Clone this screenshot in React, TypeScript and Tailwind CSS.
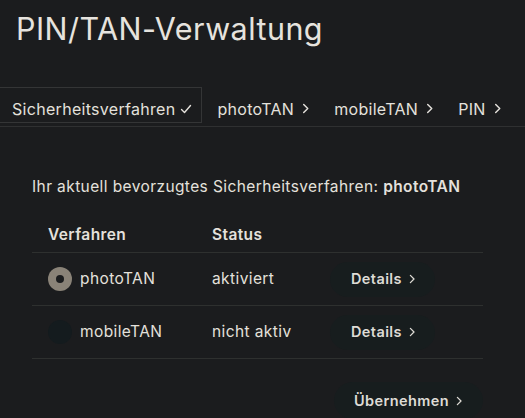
import React from "react";

function Chevron({ className = "" }: { className?: string }) {
  return (
    <svg viewBox="0 0 10 12" className={className} fill="none" stroke="currentColor" strokeWidth="1.6" strokeLinecap="round" strokeLinejoin="round">
      <path d="M3 1.5 L7.5 6 L3 10.5" />
    </svg>
  );
}

function Check({ className = "" }: { className?: string }) {
  return (
    <svg viewBox="0 0 12 12" className={className} fill="none" stroke="currentColor" strokeWidth="1.4" strokeLinecap="round" strokeLinejoin="round">
      <path d="M1.5 6.5 L4.5 9.5 L10.5 2.5" />
    </svg>
  );
}

const tabs = ["photoTAN", "mobileTAN", "PIN"];

const rows = [
  { name: "photoTAN", status: "aktiviert", selected: true },
  { name: "mobileTAN", status: "nicht aktiv", selected: false },
];

export default function App() {
  return (
    <div
      className="w-[525px] h-[418px] overflow-hidden bg-[#1b1c1e] text-[#e4e1dc]"
      style={{ fontFamily: "Inter, 'Open Sans', sans-serif" }}
    >
      <h1 className="pl-[16px] pt-[9px] text-[30.5px] leading-[40px] font-normal text-[#e6e3de] tracking-[0.45px]">
        PIN/TAN-Verwaltung
      </h1>

      <nav className="mt-[38px] flex items-start border-b border-[#2f3031] h-[40px]">
        <div className="flex items-center gap-[5px] pl-[12px] pr-[9px] pt-[7px] h-[36px] border border-[#343536] border-l-0 text-[16px] tracking-[0.3px]">
          <span>Sicherheitsverfahren</span>
          <Check className="w-[12px] h-[12px]" />
        </div>
        <div className="flex items-center">
          {tabs.map((t) => (
            <div key={t} className="flex items-center gap-[7px] pl-[15px] pr-[9px] pt-[7px] h-[36px] text-[16px] tracking-[0.3px]">
              <span>{t}</span>
              <Chevron className="w-[9px] h-[11px]" />
            </div>
          ))}
        </div>
      </nav>

      <div className="pl-[32px] w-[483px] tracking-[0.4px]">
        <p className="mt-[49px] text-[15.5px] leading-[22px]">
          Ihr aktuell bevorzugtes Sicherheitsverfahren: <span className="font-semibold">photoTAN</span>
        </p>

        <div className="mt-[19px]">
          <div className="flex items-center h-[36px] border-b border-[#2e302f] text-[15.5px] font-semibold">
            <div className="pl-[16px] w-[180px]">Verfahren</div>
            <div>Status</div>
          </div>
          {rows.map((r) => (
            <div key={r.name} className="flex items-center h-[53px] border-b border-[#2e302f] text-[15.5px]">
              <div className="pl-[16px] w-[180px] flex items-center gap-[8px]">
                {r.selected ? (
                  <span className="w-[24px] h-[24px] rounded-full bg-[#8a8378] flex items-center justify-center">
                    <span className="w-[8px] h-[8px] rounded-full bg-[#1b1c1e]" />
                  </span>
                ) : (
                  <span className="w-[24px] h-[24px] rounded-full bg-[#141b1e]" />
                )}
                <span>{r.name}</span>
              </div>
              <div className="w-[118px]">{r.status}</div>
              <button className="h-[35px] pl-[21px] pr-[19px] rounded-full bg-[#171d1e] flex items-center gap-[6px] font-semibold text-[14.5px] tracking-[0.4px] text-[#dedbd5]">
                Details
                <Chevron className="w-[8px] h-[10px]" />
              </button>
            </div>
          ))}
        </div>

        <div className="flex justify-end mt-[23px]">
          <button className="h-[37px] px-[20px] rounded-full bg-[#171d1e] flex items-center gap-[6px] font-semibold text-[14.5px] tracking-[0.4px] text-[#dedbd5]">
            Übernehmen
            <Chevron className="w-[8px] h-[10px]" />
          </button>
        </div>
      </div>
    </div>
  );
}
